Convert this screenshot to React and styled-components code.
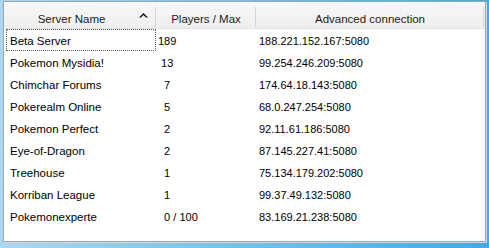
import React from "react";
import styled, { createGlobalStyle } from "styled-components";

const GlobalStyle = createGlobalStyle`
  html, body {
    margin: 0;
    padding: 0;
  }
  body {
    width: 489px;
    height: 248px;
    overflow: hidden;
    font-family: "Liberation Sans", Arial, sans-serif;
  }
`;

const Frame = styled.div`
  box-sizing: border-box;
  width: 489px;
  height: 248px;
  padding: 1px 3px 6px 3px;
  background: linear-gradient(90deg, #aad8f1 0%, #74c4ec 45%, #3eace4 100%);
`;

const ListView = styled.div`
  box-sizing: border-box;
  height: 241px;
  border: 1px solid #a4a4a4;
  box-shadow: 1px 1px 0 #ddd5cf;
  background: #fff;
  display: flex;
  flex-direction: column;
`;

const Header = styled.div`
  display: flex;
  box-sizing: border-box;
  height: 27px;
  border-bottom: 1px solid #e3e3e3;
  background: linear-gradient(#f8f8f8, #eeeeee);
`;

const HeadCell = styled.div`
  position: relative;
  box-sizing: border-box;
  flex: none;
  width: ${(p) => p.$w}px;
  display: flex;
  align-items: flex-start;
  padding-top: 10px;
  font-size: 11.5px;
  line-height: 14px;
  color: #1c1c1c;

  &::after {
    content: "";
    position: absolute;
    right: 0;
    top: 5px;
    bottom: 1px;
    width: 1px;
    background: #d5d5d5;
  }
`;

const HeadLabel = styled.span`
  flex: 1;
  text-align: center;
  white-space: nowrap;
`;

const SortArrow = styled.svg`
  flex: none;
  width: 9px;
  height: 6px;
  margin-right: 8px;
`;

const Rows = styled.div`
  display: flex;
  flex-direction: column;
`;

const Row = styled.div`
  display: flex;
  height: 22px;
  font-size: 11px;
  line-height: 20px;
  color: #000;
`;

const Cell = styled.div`
  box-sizing: border-box;
  flex: none;
  width: ${(p) => p.$w}px;
  padding: 2px 0 0 ${(p) => p.$pad}px;
  font-size: ${(p) => p.$size || 11}px;
  white-space: pre;
  overflow: hidden;

  ${(p) =>
    p.$focus &&
    `
    width: ${p.$w - 2}px;
    margin-left: 2px;
    padding: 1px 0 0 3px;
    border: 1px dotted #5a5a5a;
  `}
`;

const cols = [152, 100, 228];

const servers = [
  ["Beta Server", "189", "188.221.152.167:5080"],
  ["Pokemon Mysidia!", " 13", "99.254.246.209:5080"],
  ["Chimchar Forums", "  7", "174.64.18.143:5080"],
  ["Pokerealm Online", "  5", "68.0.247.254:5080"],
  ["Pokemon Perfect", "  2", "92.11.61.186:5080"],
  ["Eye-of-Dragon", "  2", "87.145.227.41:5080"],
  ["Treehouse", "  1", "75.134.179.202:5080"],
  ["Korriban League", "  1", "99.37.49.132:5080"],
  ["Pokemonexperte", "  0 / 100", "83.169.21.238:5080"],
];

const App = () => {
  return (
    <>
      <GlobalStyle />
      <Frame>
        <ListView>
          <Header>
            <HeadCell $w={cols[0]}>
              <HeadLabel>Server Name</HeadLabel>
              <SortArrow viewBox="0 0 9 6">
                <path d="M0 5.5 L4.5 1 L9 5.5 L7 5.5 L4.5 3 L2 5.5 Z" fill="#111" />
              </SortArrow>
            </HeadCell>
            <HeadCell $w={cols[1]}>
              <HeadLabel>Players / Max</HeadLabel>
            </HeadCell>
            <HeadCell $w={cols[2]}>
              <HeadLabel>Advanced connection</HeadLabel>
            </HeadCell>
          </Header>
          <Rows>
            {servers.map((s, i) => (
              <Row key={s[0]}>
                <Cell $w={cols[0]} $pad={6} $size={11.5} $focus={i === 0}>
                  {s[0]}
                </Cell>
                <Cell $w={cols[1]} $pad={2}>
                  {s[1]}
                </Cell>
                <Cell $w={cols[2]} $pad={3}>
                  {s[2]}
                </Cell>
              </Row>
            ))}
          </Rows>
        </ListView>
      </Frame>
    </>
  );
};

export default App;
